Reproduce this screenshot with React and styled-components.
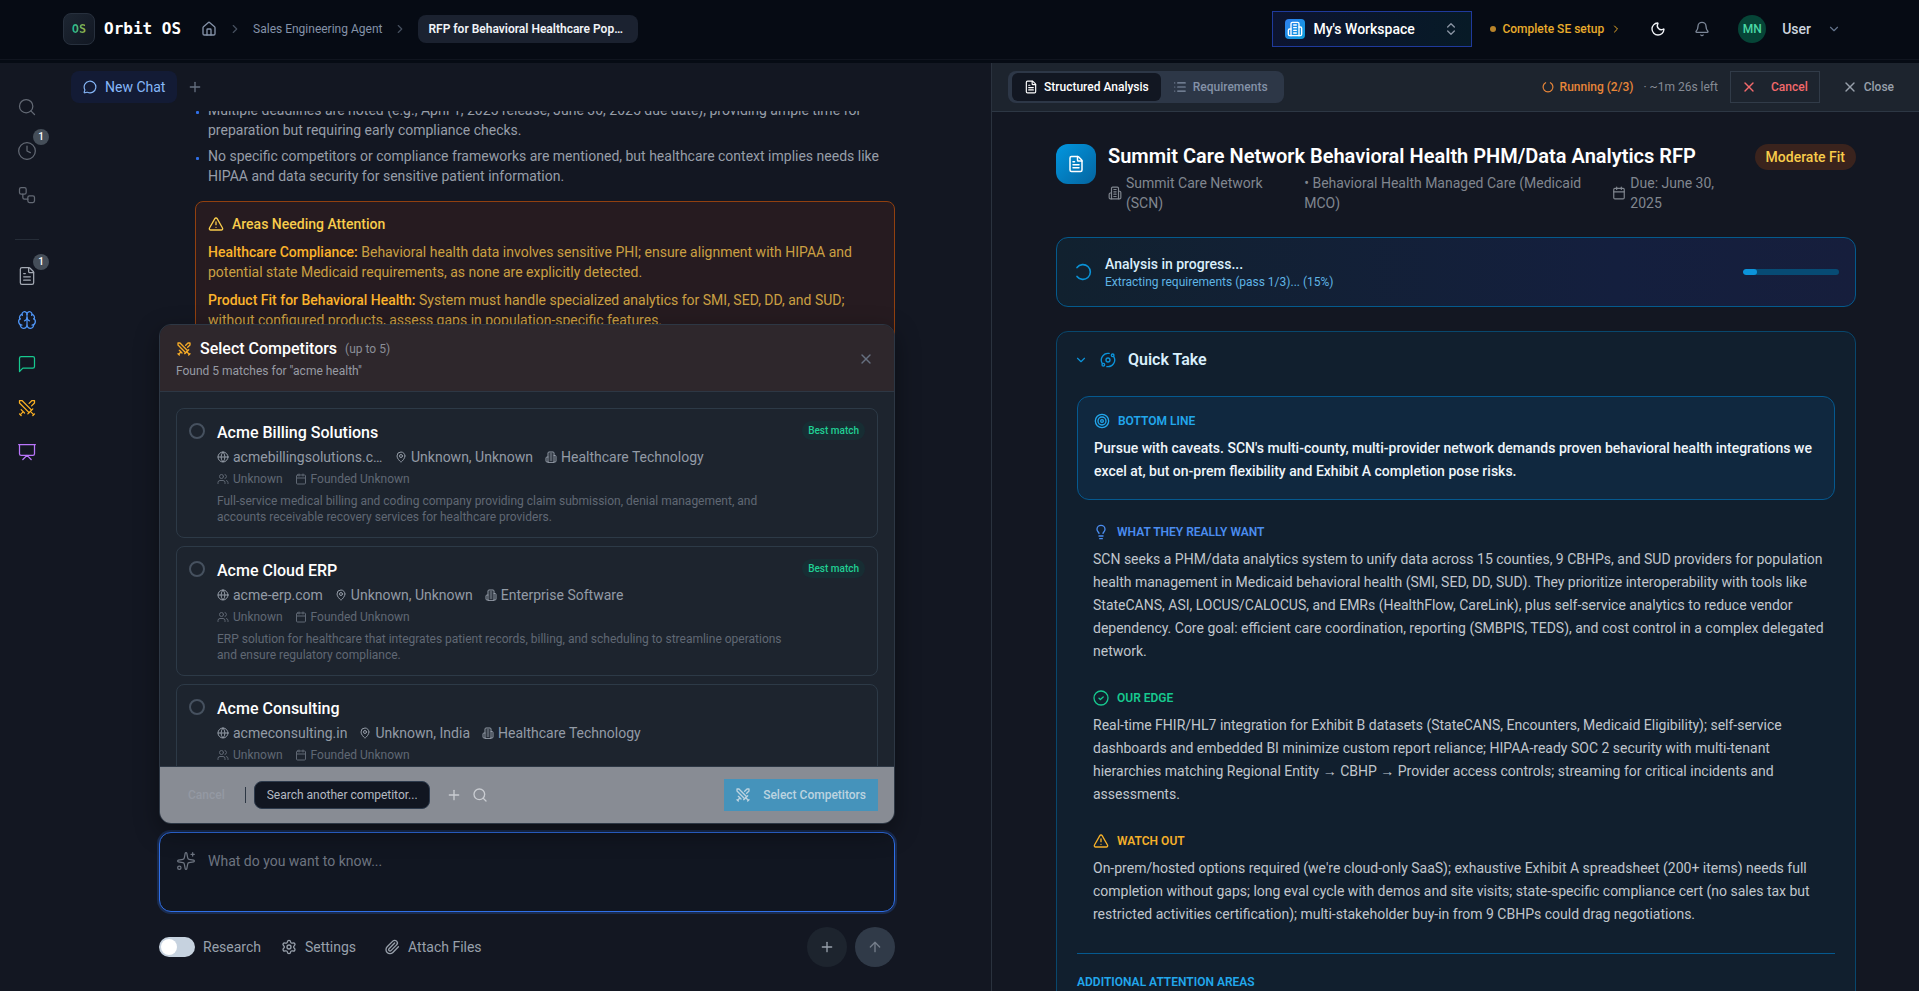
import { useState } from 'react';
import styled, { createGlobalStyle, css } from 'styled-components';
import {
  ArrowUp,
  Bell,
  Brain,
  Calendar,
  ChevronDown,
  ChevronRight,
  ChevronsUpDown,
  Clock,
  FileText,
  Globe,
  House,
  Lightbulb,
  List,
  MapPin,
  MessageCircle,
  Moon,
  Orbit,
  Paperclip,
  Plus,
  Presentation,
  Search,
  Settings,
  Sparkles,
  Swords,
  Target,
  TriangleAlert,
  Users,
  Workflow,
  X,
} from 'lucide-react';

const competitors = [
  {
    id: 1,
    name: 'Acme Billing Solutions',
    site: 'acmebillingsolutions.com',
    place: 'Unknown, Unknown',
    industry: 'Healthcare Technology',
    best: true,
    desc: 'Full-service medical billing and coding company providing claim submission, denial management, and accounts receivable recovery services for healthcare providers.',
  },
  {
    id: 2,
    name: 'Acme Cloud ERP',
    site: 'acme-erp.com',
    place: 'Unknown, Unknown',
    industry: 'Enterprise Software',
    best: true,
    desc: 'ERP solution for healthcare that integrates patient records, billing, and scheduling to streamline operations and ensure regulatory compliance.',
  },
  {
    id: 3,
    name: 'Acme Consulting',
    site: 'acmeconsulting.in',
    place: 'Unknown, India',
    industry: 'Healthcare Technology',
    best: false,
    desc: '',
  },
];

function LineIcon({ size, children }) {
  return (
    <svg
      width={size}
      height={size}
      viewBox="0 0 24 24"
      fill="none"
      stroke="currentColor"
      strokeWidth="2"
      strokeLinecap="round"
      strokeLinejoin="round"
    >
      {children}
    </svg>
  );
}

// tall building with two wings
function Building({ size }) {
  return (
    <LineIcon size={size}>
      <path d="M6 22V4a2 2 0 0 1 2-2h8a2 2 0 0 1 2 2v18Z" />
      <path d="M6 12H4a2 2 0 0 0-2 2v6a2 2 0 0 0 2 2h2" />
      <path d="M18 9h2a2 2 0 0 1 2 2v9a2 2 0 0 1-2 2h-2" />
      <path d="M10 6h4M10 10h4M10 14h4M10 18h4" />
    </LineIcon>
  );
}

function ChatBox({ size }) {
  return (
    <LineIcon size={size}>
      <path
        d="M21 15a2 2 0 0 1-2 2H7l-4 4V5a2 2 0 0 1 2-2h14a2 2 0 0 1 2 2z"
        strokeWidth="1.5"
      />
    </LineIcon>
  );
}

// circle with the small check inside
function SmallCheck() {
  return (
    <svg width="16" height="16" viewBox="0 0 16 16" fill="none" stroke="currentColor">
      <circle cx="8" cy="8" r="7" strokeWidth="1.3" />
      <path d="m6 8.2 1.4 1.3L10.2 7" strokeWidth="1.3" strokeLinecap="round" strokeLinejoin="round" />
    </svg>
  );
}

function Spinner({ size, left }) {
  return (
    <svg width={size} height={size} viewBox="0 0 20 20" fill="none" stroke="currentColor">
      <path
        d={left ? 'M4 5.6A7.4 7.4 0 1 1 4 14.4' : 'M14 2.8A8.2 8.2 0 1 1 6 2.8'}
        strokeWidth={left ? 1.6 : 2}
        strokeLinecap="round"
      />
    </svg>
  );
}

function CompetitorCard({ data, selected, onSelect }) {
  return (
    <Card>
      <Radio
        type="radio"
        name="competitor"
        id={`competitor-${data.id}`}
        checked={selected}
        onChange={onSelect}
      />
      <CardBody>
        <CardName htmlFor={`competitor-${data.id}`}>{data.name}</CardName>
        <MetaRow>
          <Meta>
            <Globe size={12} />
            <Clip>{data.site}</Clip>
          </Meta>
          <Meta>
            <MapPin size={12} />
            {data.place}
          </Meta>
          <Meta>
            <Building size={12} />
            {data.industry}
          </Meta>
        </MetaRow>
        <MetaRow $small>
          <Meta>
            <Users size={12} />
            Unknown
          </Meta>
          <Meta>
            <Calendar size={12} />
            Founded Unknown
          </Meta>
        </MetaRow>
        <Desc>{data.desc}</Desc>
      </CardBody>
      {data.best && <Best>Best match</Best>}
    </Card>
  );
}

function App() {
  const [picked, setPicked] = useState(null);
  const [progress] = useState(15);

  return (
    <Page>
      <GlobalStyle />
      <Header>
        <Brand>
          <Logo>
            <span>OS</span>
          </Logo>
          <BrandName>Orbit OS</BrandName>
        </Brand>
        <Crumbs aria-label="Breadcrumb">
          <CrumbLink href="#home" aria-label="Home">
            <House size={16} />
          </CrumbLink>
          <ChevronRight size={14} />
          <CrumbLink href="#agent">Sales Engineering Agent</CrumbLink>
          <ChevronRight size={14} />
          <CrumbCurrent>RFP for Behavioral Healthcare Population Health</CrumbCurrent>
        </Crumbs>
        <HeaderRight>
          <Workspace type="button">
            <WorkspaceIcon>
              <Building size={16} />
            </WorkspaceIcon>
            <span>My's Workspace</span>
            <ChevronsUpDown size={16} />
          </Workspace>
          <Setup href="#setup">
            <i />
            Complete SE setup
            <ChevronRight size={12} />
          </Setup>
          <HeaderIcon type="button" $light aria-label="Theme">
            <Moon size={16} />
          </HeaderIcon>
          <HeaderIcon type="button" aria-label="Notifications">
            <Bell size={16} />
          </HeaderIcon>
          <UserMenu type="button">
            <Avatar>MN</Avatar>
            User
            <ChevronDown size={14} />
          </UserMenu>
        </HeaderRight>
      </Header>

      <Main>
        <Rail>
          <RailButton aria-label="Search">
            <Search size={20} strokeWidth={1.5} />
          </RailButton>
          <RailButton aria-label="History">
            <Clock size={20} strokeWidth={1.5} />
            <RailBadge>1</RailBadge>
          </RailButton>
          <RailButton aria-label="Workflows">
            <Workflow size={20} strokeWidth={1.5} />
          </RailButton>
          <RailLine />
          <RailButton $color="#a3a9b3" aria-label="Documents">
            <FileText size={20} strokeWidth={1.5} />
            <RailBadge>1</RailBadge>
          </RailButton>
          <RailButton $color="#4f96f7" aria-label="Knowledge">
            <Brain size={20} strokeWidth={1.5} />
          </RailButton>
          <RailButton $color="#17c98f" aria-label="Chat">
            <ChatBox size={20} />
          </RailButton>
          <RailButton $color="#fbb124" aria-label="Competitors">
            <Swords size={20} strokeWidth={1.5} />
          </RailButton>
          <RailButton $color="#b975fa" aria-label="Presentations">
            <Presentation size={20} strokeWidth={1.5} />
          </RailButton>
        </Rail>

        <ChatPanel>
          <ChatTabs>
            <ChatTab type="button">
              <MessageCircle size={14} />
              New Chat
            </ChatTab>
            <GhostButton type="button" aria-label="New tab">
              <Plus size={16} />
            </GhostButton>
          </ChatTabs>
          <Messages>
            <Message>
              <Bullets>
                <li>
                  Multiple deadlines are noted (e.g., April 1, 2025 release, June 30, 2025 due
                  date), providing ample time for preparation but requiring early compliance
                  checks.
                </li>
                <li>
                  No specific competitors or compliance frameworks are mentioned, but healthcare
                  context implies needs like HIPAA and data security for sensitive patient
                  information.
                </li>
              </Bullets>
              <Attention>
                <h3>
                  <TriangleAlert size={16} />
                  Areas Needing Attention
                </h3>
                <p>
                  <b>Healthcare Compliance:</b> Behavioral health data involves sensitive PHI;
                  ensure alignment with HIPAA and potential state Medicaid requirements, as none
                  are explicitly detected.
                </p>
                <p>
                  <b>Product Fit for Behavioral Health:</b> System must handle specialized
                  analytics for SMI, SED, DD, and SUD; without configured products, assess gaps in
                  population-specific features.
                </p>
              </Attention>
            </Message>
          </Messages>

          <ComposerArea>
            <Modal role="dialog" aria-labelledby="modal-title">
              <ModalHeader>
                <div>
                  <ModalTitle id="modal-title">
                    <Swords size={16} />
                    Select Competitors
                    <small>(up to 5)</small>
                  </ModalTitle>
                  <ModalSub>Found 5 matches for "acme health"</ModalSub>
                </div>
                <GhostButton type="button" aria-label="Close dialog">
                  <X size={16} />
                </GhostButton>
              </ModalHeader>
              <CardList>
                {competitors.map((e) => (
                  <CompetitorCard
                    key={e.id}
                    data={e}
                    selected={picked === e.id}
                    onSelect={() => setPicked(e.id)}
                  />
                ))}
              </CardList>
              <ModalFooter>
                <FooterCancel type="button">Cancel</FooterCancel>
                <FooterLine />
                <FooterInput
                  type="text"
                  aria-label="Search another competitor"
                  placeholder="Search another competitor..."
                />
                <FooterIcons>
                  <Plus size={16} />
                  <Search size={16} />
                </FooterIcons>
                <SelectButton type="button">
                  <Swords size={16} />
                  Select Competitors
                </SelectButton>
              </ModalFooter>
            </Modal>

            <Composer>
              <Sparkles size={20} strokeWidth={1.5} />
              <textarea aria-label="Message" placeholder="What do you want to know..." />
            </Composer>
            <ComposerTools>
              <Switch>
                <input type="checkbox" />
                <span />
                Research
              </Switch>
              <ToolButton type="button">
                <Settings size={16} />
                Settings
              </ToolButton>
              <ToolButton type="button">
                <Paperclip size={16} />
                Attach Files
              </ToolButton>
              <RoundButton type="button" aria-label="Add">
                <Plus size={16} />
              </RoundButton>
              <RoundButton type="button" $send aria-label="Send">
                <ArrowUp size={16} />
              </RoundButton>
            </ComposerTools>
          </ComposerArea>
        </ChatPanel>

        <Analysis>
          <AnalysisBar>
            <Segment>
              <SegmentTab type="button" $active>
                <FileText size={14} />
                Structured Analysis
              </SegmentTab>
              <SegmentTab type="button">
                <List size={14} />
                Requirements
              </SegmentTab>
            </Segment>
            <Status>
              <Spinner size={12} />
              Running (2/3)
              <span>· ~1m 26s left</span>
            </Status>
            <CancelButton type="button">
              <X size={16} />
              Cancel
            </CancelButton>
            <CloseButton type="button">
              <X size={16} />
              Close
            </CloseButton>
          </AnalysisBar>

          <AnalysisBody>
            <DocHead>
              <DocIcon>
                <FileText size={18} />
              </DocIcon>
              <DocText>
                <h1>Summit Care Network Behavioral Health PHM/Data Analytics RFP</h1>
                <DocMeta>
                  <span>
                    <Building size={14} />
                    <em>Summit Care Network (SCN)</em>
                  </span>
                  <span>
                    <em>• Behavioral Health Managed Care (Medicaid MCO)</em>
                  </span>
                  <span>
                    <Calendar size={14} />
                    <em>Due: June 30, 2025</em>
                  </span>
                </DocMeta>
              </DocText>
              <Fit>Moderate Fit</Fit>
            </DocHead>

            <Progress>
              <Spinner size={20} left />
              <div>
                <strong>Analysis in progress...</strong>
                <p>Extracting requirements (pass 1/3)... (15%)</p>
              </div>
              <Track>
                <div style={{ width: `${progress}%` }} />
              </Track>
            </Progress>

            <QuickTake>
              <QuickHead type="button">
                <ChevronDown size={14} />
                <Orbit size={16} />
                <h2>Quick Take</h2>
              </QuickHead>
              <Section $boxed>
                <SectionTitle $color="#22a7ec">
                  <Target size={16} />
                  BOTTOM LINE
                </SectionTitle>
                <p>
                  Pursue with caveats. SCN's multi-county, multi-provider network demands proven
                  behavioral health integrations we excel at, but on-prem flexibility and Exhibit A
                  completion pose risks.
                </p>
              </Section>
              <Section>
                <SectionTitle $color="#4b8df0">
                  <Lightbulb size={16} />
                  WHAT THEY REALLY WANT
                </SectionTitle>
                <p>
                  SCN seeks a PHM/data analytics system to unify data across 15 counties, 9 CBHPs,
                  and SUD providers for population health management in Medicaid behavioral health
                  (SMI, SED, DD, SUD). They prioritize interoperability with tools like StateCANS,
                  ASI, LOCUS/CALOCUS, and EMRs (HealthFlow, CareLink), plus self-service analytics
                  to reduce vendor dependency. Core goal: efficient care coordination, reporting
                  (SMBPIS, TEDS), and cost control in a complex delegated network.
                </p>
              </Section>
              <Section>
                <SectionTitle $color="#17c98f">
                  <SmallCheck />
                  OUR EDGE
                </SectionTitle>
                <p>
                  Real-time FHIR/HL7 integration for Exhibit B datasets (StateCANS, Encounters,
                  Medicaid Eligibility); self-service dashboards and embedded BI minimize custom
                  report reliance; HIPAA-ready SOC 2 security with multi-tenant hierarchies
                  matching Regional Entity → CBHP → Provider access controls; streaming for
                  critical incidents and assessments.
                </p>
              </Section>
              <Section>
                <SectionTitle $color="#f5b02a">
                  <TriangleAlert size={16} />
                  WATCH OUT
                </SectionTitle>
                <p>
                  On-prem/hosted options required (we're cloud-only SaaS); exhaustive Exhibit A
                  spreadsheet (200+ items) needs full completion without gaps; long eval cycle with
                  demos and site visits; state-specific compliance cert (no sales tax but
                  restricted activities certification); multi-stakeholder buy-in from 9 CBHPs could
                  drag negotiations.
                </p>
              </Section>
              <Additional>ADDITIONAL ATTENTION AREAS</Additional>
            </QuickTake>
          </AnalysisBody>
        </Analysis>
      </Main>
    </Page>
  );
}

const GlobalStyle = createGlobalStyle`
  * {
    box-sizing: border-box;
    margin: 0;
    padding: 0;
  }
  body {
    background: #060b14;
    color: #fff;
    font-family: Roboto, 'Liberation Sans', sans-serif;
    font-size: 14px;
    line-height: 20px;
  }
  button, input, textarea {
    font: inherit;
    color: inherit;
    border: 0;
    background: none;
  }
  a {
    color: inherit;
    text-decoration: none;
  }
  svg {
    flex-shrink: 0;
  }
`;

const Page = styled.div`
  display: flex;
  flex-direction: column;
  height: 100vh;
  overflow: hidden;
`;

/* header */
const Header = styled.header`
  display: flex;
  align-items: center;
  height: 60px;
  margin-bottom: 3px;
  padding: 0 78px 2px 63px;
  border-bottom: 1px solid #10151f;
  flex-shrink: 0;
`;
const Brand = styled.div`
  display: flex;
  align-items: center;
  gap: 9px;
  margin-right: 20px;
`;
const Logo = styled.div`
  display: grid;
  place-items: center;
  width: 32px;
  height: 32px;
  border: 1px solid #27303d;
  border-radius: 8px;
  background: linear-gradient(135deg, #1d2632, #111722);
  span {
    font: bold 12px 'DejaVu Sans Mono', monospace;
    color: transparent;
    background: linear-gradient(90deg, #14b89a, #a3b13a);
    background-clip: text;
  }
`;
const BrandName = styled.span`
  font: bold 16px 'DejaVu Sans Mono', monospace;
`;
const Crumbs = styled.nav`
  display: flex;
  align-items: center;
  gap: 11px;
  color: #46505f;
  font-size: 12px;
`;
const CrumbLink = styled.a`
  display: flex;
  color: #8492a8;
`;
const CrumbCurrent = styled.span`
  width: 220px;
  padding: 4px 12px 4px 10px;
  border-radius: 8px;
  background: #1b2230;
  color: #f1f4f8;
  font-weight: 600;
  overflow: hidden;
  white-space: nowrap;
  text-overflow: ellipsis;
`;
const HeaderRight = styled.div`
  display: flex;
  align-items: center;
  margin-left: auto;
`;
const Workspace = styled.button`
  display: flex;
  align-items: center;
  gap: 8px;
  width: 200px;
  height: 36px;
  padding: 0 12px;
  border: 1px solid #1f3a9c;
  background: linear-gradient(90deg, #0c1430, #071a26);
  font-weight: 500;
  text-align: left;
  span:nth-child(2) {
    flex: 1;
  }
  > svg {
    color: #8a94a3;
  }
`;
const WorkspaceIcon = styled.span`
  display: grid;
  place-items: center;
  width: 20px;
  height: 20px;
  border-radius: 4px;
  background: linear-gradient(135deg, #2f7ff0, #0c9fdc);
`;
const Setup = styled.a`
  display: flex;
  align-items: center;
  gap: 6px;
  margin: 0 28px 0 18px;
  color: #e9ab2c;
  font-size: 12px;
  font-weight: 500;
  i {
    width: 6px;
    height: 6px;
    border-radius: 50%;
    background: #b8832a;
  }
`;
const HeaderIcon = styled.button`
  display: flex;
  margin-right: 28px;
  color: ${(props) => (props.$light ? '#f1f4f8' : '#7c8798')};
`;
const UserMenu = styled.button`
  display: flex;
  align-items: center;
  gap: 16px;
  color: #cdd5df;
  font-weight: 500;
  svg {
    color: #64748b;
  }
`;
const Avatar = styled.span`
  display: grid;
  place-items: center;
  width: 28px;
  height: 28px;
  border-radius: 50%;
  background: #064537;
  color: #4bd9a5;
  font-size: 12px;
`;

/* layout */
const Main = styled.main`
  display: grid;
  grid-template-columns: 63px 1fr 1fr;
  flex: 1;
  min-height: 0;
  background: #131722;
`;
const Rail = styled.nav`
  display: flex;
  flex-direction: column;
  gap: 4px;
  padding: 24px 0 0 7px;
`;
const RailButton = styled.button`
  position: relative;
  display: grid;
  place-items: center;
  width: 40px;
  height: 40px;
  color: ${(props) => props.$color || '#636974'};
`;
const RailBadge = styled.span`
  position: absolute;
  top: -2px;
  right: -2px;
  width: 16px;
  height: 16px;
  border-radius: 50%;
  background: #454e59;
  color: #fff;
  font-size: 10px;
  font-weight: 500;
  line-height: 16px;
`;
const RailLine = styled.div`
  width: 24px;
  height: 1px;
  margin: 20px 8px 12px;
  background: #262d38;
`;

/* chat */
const ChatPanel = styled.section`
  display: flex;
  flex-direction: column;
  min-width: 0;
  min-height: 0;
`;
const ChatTabs = styled.div`
  display: flex;
  align-items: center;
  gap: 10px;
  height: 48px;
  padding: 0 8px;
  flex-shrink: 0;
`;
const ChatTab = styled.button`
  display: flex;
  align-items: center;
  gap: 8px;
  height: 32px;
  padding: 0 12px;
  border-radius: 8px;
  background: #131b35;
  color: #86b7f8;
`;
const GhostButton = styled.button`
  display: flex;
  color: #667080;
`;
const Messages = styled.div`
  flex: 1;
  min-height: 0;
  overflow: hidden;
  padding: 0 96px 0 132px;
`;
const Message = styled.div`
  margin-top: -11px;
`;
const Bullets = styled.ul`
  display: flex;
  flex-direction: column;
  gap: 6px;
  margin-bottom: 15px;
  padding: 0 13px;
  list-style: none;
  color: #979ea9;
  li {
    position: relative;
  }
  li::before {
    content: '';
    position: absolute;
    left: -12px;
    top: 11px;
    width: 3px;
    height: 3px;
    border-radius: 1px;
    background: #2f6fe8;
  }
`;
const Attention = styled.div`
  display: flex;
  flex-direction: column;
  gap: 8px;
  padding: 12px;
  border: 1px solid #91400f;
  border-radius: 8px;
  background: #261b20;
  color: #cba043;
  h3 {
    display: flex;
    align-items: center;
    gap: 8px;
    color: #f8cc4b;
    font-size: 14px;
    font-weight: 500;
  }
  b {
    color: #fbb32c;
    font-weight: 500;
  }
`;
const ComposerArea = styled.div`
  position: relative;
  margin: 0 96px;
  padding-bottom: 24px;
`;
const Composer = styled.div`
  display: flex;
  gap: 12px;
  height: 80px;
  padding: 18px 16px;
  border: 1px solid #2f6fe8;
  border-radius: 12px;
  box-shadow: 0 0 0 2px #1a2c50;
  background: #111621;
  color: #6d7480;
  textarea {
    flex: 1;
    resize: none;
    outline: 0;
  }
  textarea::placeholder {
    color: #6d7480;
  }
`;
const ComposerTools = styled.div`
  display: flex;
  align-items: center;
  gap: 8px;
  margin-top: 15px;
  color: #98a0ab;
`;
const Switch = styled.label`
  display: flex;
  align-items: center;
  gap: 8px;
  input {
    position: absolute;
    opacity: 0;
  }
  span {
    width: 36px;
    height: 20px;
    padding: 2px;
    border-radius: 10px;
    background: #c6d2df;
  }
  span::before {
    content: '';
    display: block;
    width: 16px;
    height: 16px;
    border-radius: 50%;
    background: #fff;
  }
`;
const ToolButton = styled.button`
  display: flex;
  align-items: center;
  gap: 8px;
  padding: 0 8px 0 12px;
`;
const RoundButton = styled.button`
  display: grid;
  place-items: center;
  width: 40px;
  height: 40px;
  border-radius: 50%;
  background: ${(props) => (props.$send ? '#303a48' : '#1d242e')};
  color: ${(props) => (props.$send ? '#747d8a' : '#98a0ab')};
  &:nth-last-child(2) {
    margin-left: auto;
  }
`;

/* competitor dialog */
const Modal = styled.div`
  position: absolute;
  right: 0;
  bottom: 100%;
  left: 0;
  display: flex;
  flex-direction: column;
  height: 500px;
  margin-bottom: 8px;
  border: 1px solid #2d3744;
  border-radius: 12px;
  background: #1d242e;
  box-shadow: 0 8px 24px #0006;
  overflow: hidden;
`;
const ModalHeader = styled.div`
  display: flex;
  align-items: center;
  justify-content: space-between;
  padding: 12px 20px 10px 16px;
  border-bottom: 1px solid #2d3744;
  background: #2e272c;
`;
const ModalTitle = styled.h2`
  display: flex;
  align-items: center;
  gap: 8px;
  font-size: 16px;
  font-weight: 500;
  line-height: 24px;
  > svg {
    color: #f5ab27;
  }
  small {
    color: #8b8e97;
    font-size: 12px;
    font-weight: 400;
  }
`;
const ModalSub = styled.p`
  padding: 2px 0;
  color: #979ba4;
  font-size: 12px;
  line-height: 16px;
`;
const CardList = styled.div`
  flex: 1;
  min-height: 0;
  display: flex;
  flex-direction: column;
  gap: 8px;
  padding: 16px;
  overflow: hidden;
`;
const Card = styled.div`
  display: flex;
  align-items: flex-start;
  gap: 12px;
  min-height: 130px;
  flex-shrink: 0;
  padding: 12px;
  border: 1px solid #2d3a47;
  border-radius: 8px;
`;
const Radio = styled.input`
  appearance: none;
  width: 16px;
  height: 16px;
  margin-top: 2px;
  border: 2px solid #46515f;
  border-radius: 50%;
  &:checked {
    background: #22a7ec;
  }
`;
const CardBody = styled.div`
  flex: 1;
  min-width: 0;
`;
const CardName = styled.label`
  display: block;
  font-size: 16px;
  font-weight: 500;
  line-height: 24px;
`;
const MetaRow = styled.div`
  display: flex;
  gap: 12px;
  margin-top: 2px;
  color: #939ba6;
  ${(props) =>
    props.$small &&
    css`
      margin-top: 4px;
      color: #606874;
      font-size: 12px;
      line-height: 16px;
    `}
`;
const Meta = styled.span`
  display: flex;
  align-items: center;
  gap: 4px;
`;
const Clip = styled.span`
  max-width: 150px;
  overflow: hidden;
  white-space: nowrap;
  text-overflow: ellipsis;
`;
const Desc = styled.p`
  margin-top: 6px;
  color: #606874;
  font-size: 12px;
  line-height: 16px;
`;
const Best = styled.span`
  padding: 2px 6px;
  border-radius: 10px;
  background: #172d33;
  color: #20cf94;
  font-size: 10px;
  font-weight: 500;
  line-height: 15px;
`;
const ModalFooter = styled.div`
  display: flex;
  align-items: center;
  height: 57px;
  padding: 0 16px;
  border-top: 1px solid #2d3744;
  background: #888c94;
  font-size: 12px;
  flex-shrink: 0;
`;
const FooterCancel = styled.button`
  padding: 6px 12px;
  color: #9499a3;
  font-weight: 500;
`;
const FooterLine = styled.div`
  width: 1px;
  height: 16px;
  margin: 0 8px;
  background: #2d3744;
`;
const FooterInput = styled.input`
  width: 176px;
  height: 28px;
  padding: 0 12px;
  border: 1px solid #2d3a4c;
  border-radius: 8px;
  background: #111621;
  &::placeholder {
    color: #b5bac2;
  }
`;
const FooterIcons = styled.div`
  display: flex;
  gap: 10px;
  margin: 0 auto 0 16px;
  color: #c9ccd1;
`;
const SelectButton = styled.button`
  display: flex;
  align-items: center;
  gap: 12px;
  height: 32px;
  padding: 0 12px 0 11px;
  background: #4593bb;
  color: #bcd3e0;
  font-weight: 500;
`;

/* analysis */
const Analysis = styled.section`
  display: flex;
  flex-direction: column;
  min-width: 0;
  min-height: 0;
  border-left: 1px solid #2a323e;
`;
const AnalysisBar = styled.div`
  display: flex;
  align-items: center;
  height: 49px;
  padding: 0 25px 0 16px;
  border-bottom: 1px solid #2d3744;
  background: #1d242e;
  font-size: 12px;
  flex-shrink: 0;
`;
const Segment = styled.div`
  display: flex;
  padding: 2px 4px;
  border-radius: 8px;
  background: #2d3747;
`;
const SegmentTab = styled.button`
  display: flex;
  align-items: center;
  gap: 6px;
  height: 28px;
  padding: 0 12px;
  border-radius: 6px;
  background: ${(props) => (props.$active ? '#121722' : 'none')};
  color: ${(props) => (props.$active ? '#fff' : '#8492a8')};
  font-weight: 500;
`;
const Status = styled.div`
  display: flex;
  align-items: center;
  gap: 6px;
  margin-left: auto;
  color: #e88639;
  font-weight: 500;
  span {
    margin-left: 4px;
    color: #858b95;
    font-weight: 400;
  }
`;
const CancelButton = styled.button`
  display: flex;
  align-items: center;
  gap: 14px;
  height: 32px;
  margin: 0 22px 0 12px;
  padding: 0 11px 0 10px;
  border: 1px solid #313b48;
  color: #f2696b;
  font-weight: 500;
`;
const CloseButton = styled.button`
  display: flex;
  align-items: center;
  gap: 6px;
  color: #98a0ab;
  font-weight: 500;
`;
const AnalysisBody = styled.div`
  flex: 1;
  min-height: 0;
  overflow: hidden;
  padding: 32px 63px 0 64px;
`;
const DocHead = styled.div`
  display: flex;
  align-items: flex-start;
  gap: 12px;
`;
const DocIcon = styled.div`
  display: grid;
  place-items: center;
  width: 40px;
  height: 40px;
  border-radius: 12px;
  background: linear-gradient(135deg, #0297e0, #04649f);
  flex-shrink: 0;
`;
const DocText = styled.div`
  flex: 1;
  min-width: 0;
  h1 {
    font-size: 20px;
    font-weight: 600;
    line-height: 25px;
  }
`;
const DocMeta = styled.div`
  display: flex;
  gap: 16px;
  margin-top: 4px;
  padding-right: 4px;
  color: #80868f;
  span {
    display: flex;
    align-items: center;
    gap: 4px;
  }
  em {
    font-style: normal;
  }
`;
const Fit = styled.span`
  padding: 3px 11px;
  border-radius: 13px;
  background: #3a231d;
  color: #f8cc4b;
  font-weight: 500;
`;
const Progress = styled.div`
  display: flex;
  align-items: center;
  gap: 12px;
  height: 70px;
  margin: 24px 0;
  padding: 0 16px;
  border: 1px solid #045a8d;
  border-radius: 12px;
  background: linear-gradient(90deg, #11212f, #141f3e 70%, #161e3c);
  color: #0a92d6;
  strong {
    display: block;
    color: #d9effc;
    font-weight: 500;
    line-height: 20px;
  }
  p {
    color: #5fb4e4;
    font-size: 12px;
    line-height: 16px;
  }
`;
const Track = styled.div`
  width: 96px;
  height: 6px;
  margin-left: auto;
  border-radius: 3px;
  background: #074b74;
  overflow: hidden;
  div {
    height: 100%;
    border-radius: 3px;
    background: #0c93da;
  }
`;
const QuickTake = styled.div`
  padding: 0 20px 20px;
  border: 1px solid #08476d;
  border-radius: 12px;
  background: #111f2e;
`;
const QuickHead = styled.button`
  display: flex;
  align-items: center;
  gap: 12px;
  width: 100%;
  height: 56px;
  margin-bottom: 8px;
  color: #0c93da;
  svg:first-child {
    margin-left: -3px;
  }
  h2 {
    color: #d9effc;
    font-size: 16px;
    font-weight: 600;
  }
`;
const SectionTitle = styled.h3`
  display: flex;
  align-items: center;
  gap: 8px;
  margin-bottom: 8px;
  color: ${(props) => props.$color};
  font-size: 12px;
  font-weight: 600;
  line-height: 16px;
`;
const Section = styled.div`
  padding: 12px 10px 15px 16px;
  color: #c0c6cd;
  p {
    line-height: 23px;
  }
  ${(props) =>
    props.$boxed &&
    css`
      margin-bottom: 12px;
      padding: 16px;
      border: 1px solid #05598f;
      border-radius: 12px;
      background: #10283f;
      color: #eef5fa;
      font-weight: 500;
    `}
`;
const Additional = styled.h3`
  margin-top: 12px;
  padding-top: 20px;
  border-top: 1px solid #05598f;
  color: #22a7ec;
  font-size: 12px;
  font-weight: 600;
  line-height: 16px;
`;

export default App;
